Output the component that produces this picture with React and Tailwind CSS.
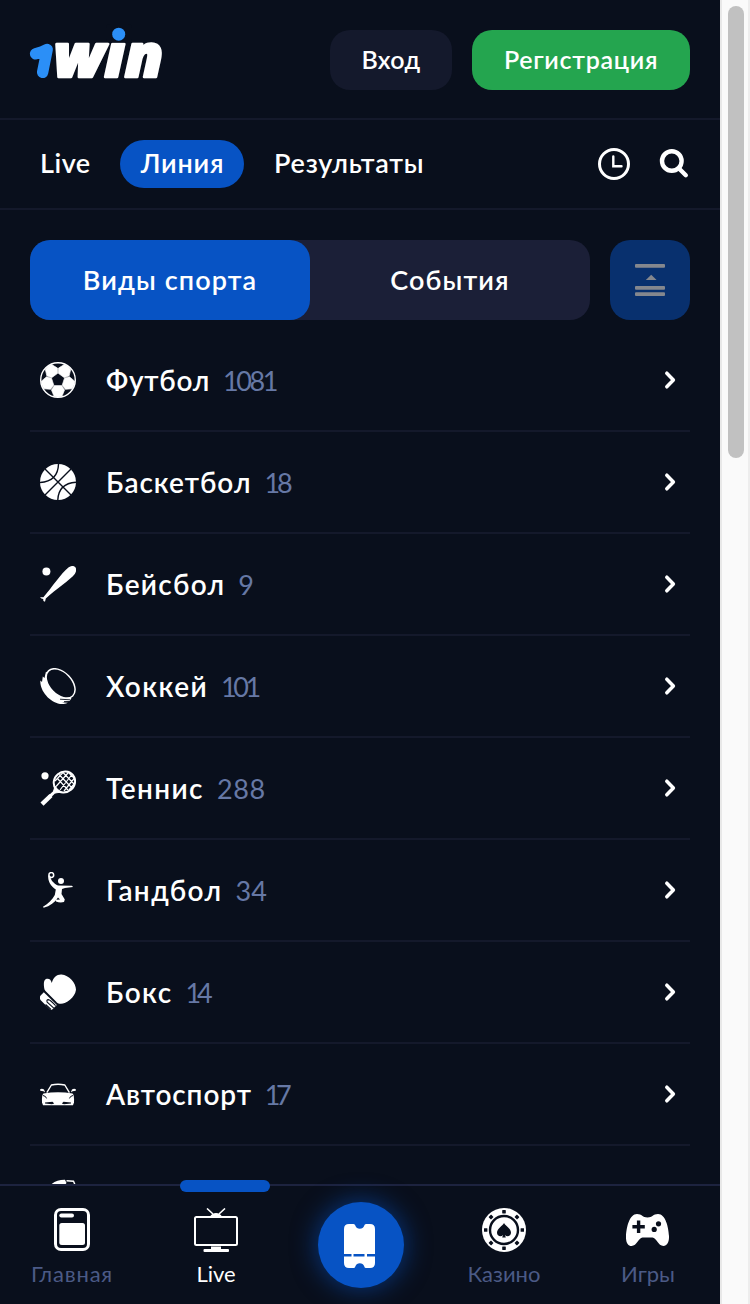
import React from "react";

const BG = "#090f1c";

function Logo() {
  return (
    <svg width="150" height="90" viewBox="0 0 150 90" className="block overflow-visible" role="img">
      <path d="M5.6 33.8Q13 32 17.2 29.5L12.6 52.4" fill="none" stroke="#2b8ff7" strokeWidth="11.4" strokeLinecap="round" strokeLinejoin="round" />
      <text x="23.4" y="56.8" fontSize="60" fontWeight="800" fontStyle="italic" fontFamily="'Open Sans','Noto Sans',sans-serif" fill="#fff" stroke="#fff" strokeWidth="2.6" strokeLinejoin="round" textLength="110" lengthAdjust="spacingAndGlyphs">win</text>
      <rect x="76" y="4" width="26" height="18.6" rx="4" fill={BG} />
      <circle cx="88.7" cy="14.2" r="6.5" fill="#2b8ff7" />
    </svg>
  );
}

function Football() {
  return (
    <svg width="36" height="36" viewBox="0 0 36 36">
      <circle cx="18" cy="18" r="17.3" fill="none" stroke="#fff" strokeWidth="1.4" />
      {[0, 72, 144, 216, 288].map((a) => (
        <path key={a} transform={`rotate(${a} 18 18)`} d="M14.3 23.6H21.7L24.6 27.9L22 34.2Q18 35.6 14 34.2L11.4 27.9Z" fill="#fff" stroke="#fff" strokeWidth=".6" strokeLinejoin="round" />
      ))}
    </svg>
  );
}

function Basketball() {
  return (
    <svg width="36" height="36" viewBox="0 0 36 36">
      <circle cx="18" cy="18" r="18" fill="#fff" />
      <path d="M5 5L31 31M31 5L5 31M18.5 0Q18 17.5 0 18.5M36 18.3Q18.5 19.5 17.8 36" fill="none" stroke={BG} strokeWidth="1.4" />
    </svg>
  );
}

function Baseball() {
  return (
    <svg width="36" height="36" viewBox="0 0 36 36" fill="#fff">
      <circle cx="6.4" cy="5.5" r="4" />
      <path d="M28.4 1.4Q33-1.4 35.4 1.2Q37.2 4 34.8 8C30 14 16 23 5.8 32.6L5 35.8L3.4 35L3.2 33L1.4 32.6L0 31.2L3.4 31.2C12 21 21.4 7 28.4 1.4Z" />
    </svg>
  );
}

function Hockey() {
  return (
    <svg width="36" height="36" viewBox="0 0 36 36">
      <path d="M6 3.5L4.5 10L2.8 8.5L2 14L.4 12.5C-.5 22 9 34 20 36Q25 36.4 28 34.8L22 34.2L29.5 33.2L31.5 30Z" fill="#fff" />
      <ellipse cx="20.6" cy="15.4" rx="17.4" ry="11" transform="rotate(46 20.6 15.4)" fill={BG} stroke="#fff" strokeWidth="1.5" />
      <path d="M20 31.2L30 31.8M24 33.6H30" stroke={BG} strokeWidth=".9" />
    </svg>
  );
}

function Tennis() {
  return (
    <svg width="36" height="36" viewBox="0 0 36 36" fill="none" stroke="#fff">
      <circle cx="5" cy="5.8" r="3.6" fill="#fff" stroke="none" />
      <ellipse cx="24.4" cy="12" rx="11" ry="10.2" transform="rotate(-40 24.4 12)" strokeWidth="2" />
      <path d="M17 8L28 20M19 4.5L32 18M23 2.5L34 14M28 2L35 9M31.5 5L20 20M28 3L16 16.5M23 2.5L15 11M34.5 8L24 21M35 13L29 20" strokeWidth="1.2" />
      <path d="M15 16Q17 20 21.5 22L15 23L13.5 21.5Z" fill="#fff" strokeWidth="1" />
      <path d="M15.5 21L9 27.2" strokeWidth="3" />
      <path d="M11 25.5L2 34.2" strokeWidth="4.4" />
    </svg>
  );
}

function Handball() {
  return (
    <svg width="36" height="36" viewBox="0 0 36 36" fill="#fff">
      <circle cx="11.3" cy="3" r="2.4" fill="none" stroke="#fff" strokeWidth="1.5" />
      <circle cx="21" cy="9" r="3" />
      <path d="M8.3 3.5L10.2 3.8C10.5 8 13.5 11.5 18 13.5L32 13.8L33 15L25 16L22 17L21.5 22L24.8 27.5L24 30Q20 31 16 29.5L16 27.8L20 27.6L18 25.5C15 30.5 10 34 3.6 35.8L3 34.7C8.5 31.5 12 28 14.8 23L15.8 17.5C11 14.5 7.5 9 8.3 3.5Z" />
    </svg>
  );
}

function Boxing() {
  return (
    <svg width="36" height="36" viewBox="0 0 36 36">
      <path d="M4.5 15.5C3.4 10 3.6 5.4 6.6 4.8C9.6 4.4 11 6 11.8 9C13 3.5 17 .2 21.5 .5C29 1 36 9 36 15.8C35 24 26 29.6 21 29.8C18.4 29.8 17 28.6 16 27.4L5.5 17Z" fill="#fff" />
      <path d="M3.8 18.3L16.8 30.9L12.2 35.6Q11 36.2 9.8 35.2L.5 26Q-.4 24 .2 22Z" fill="#fff" />
      <path d="M13.8 34.2L7.2 28.2Q6.2 25.8 8.4 25.6Q10 25.6 15.6 31.6M11 35.5L5.6 30.5" fill="none" stroke={BG} strokeWidth="1.1" />
    </svg>
  );
}

function Car() {
  return (
    <svg width="36" height="36" viewBox="0 0 36 36">
      <path d="M6.8 16.6L11.4 9Q18 7.4 24.8 9L29.4 16.6" fill="none" stroke="#fff" strokeWidth="1.4" />
      <path d="M0 13.4Q2 12 4 13.6L5.2 16.4L3.4 15.2L.3 14.8ZM36 13.4Q34 12 32 13.6L30.8 16.4L32.6 15.2L35.7 14.8Z" fill="#fff" />
      <path d="M3.4 17.4Q18 15 32.6 17.4Q34.4 19 34 26.5L33 29.2H3L2 26.5Q1.6 19 3.4 17.4Z" fill="#fff" />
      <path d="M3 19.5Q6 20 6.5 22.4M33 19.5Q30 20 29.5 22.4" stroke={BG} strokeWidth="1" fill="none" />
      <path d="M5 26.4L12.5 25.8L14.2 27.6L12 28.2L5 27.6ZM31 26.4L23.5 25.8L21.8 27.6L24 28.2L31 27.6Z" fill={BG} />
    </svg>
  );
}

function Cycling() {
  return (
    <svg width="36" height="36" viewBox="0 0 36 36">
      <path d="M10 6.5Q16 .6 25 .8L26.5 4L24 7Z" fill="#fff" />
      <path d="M26.5 1.8L33.5 2.2L35.5 7" fill="none" stroke="#fff" strokeWidth="1.4" />
    </svg>
  );
}

const sports = [
  ["Футбол", "1081", Football, "tracking-[0.7px]", "tracking-[-2.4px]"],
  ["Баскетбол", "18", Basketball, "tracking-[0.95px]", "tracking-[-3px]"],
  ["Бейсбол", "9", Baseball, "tracking-[1.25px]", ""],
  ["Хоккей", "101", Hockey, "tracking-[1.4px]", "tracking-[-3.4px]"],
  ["Теннис", "288", Tennis, "tracking-[1.4px]", "tracking-[0.6px]"],
  ["Гандбол", "34", Handball, "tracking-[1.4px]", ""],
  ["Бокс", "14", Boxing, "tracking-[1.3px]", "tracking-[-4px]"],
  ["Автоспорт", "17", Car, "tracking-[0.9px]", "tracking-[-4.5px]"],
];

function SportRow({ name, count, Icon, nameTracking, countTracking }) {
  return (
    <li className="flex h-[102px] shrink-0 items-center border-b-2 border-[#14192b] pl-2.5 pr-3">
      <Icon />
      <span className={`ml-[30px] text-[28px] font-semibold leading-9 ${nameTracking}`}>{name}</span>
      <span className={`ml-[13px] pt-0.5 text-[27px] leading-9 text-[#6678a5] ${countTracking}`}>{count}</span>
      <svg className="ml-auto" width="16" height="20" viewBox="0 0 16 20">
        <path d="M4.8 3.2L11.4 10L4.8 16.8" fill="none" stroke="#fff" strokeWidth="3.5" strokeLinecap="round" strokeLinejoin="round" />
      </svg>
    </li>
  );
}

function NavItem({ label, active, tracking = "", children }) {
  return (
    <a className={`flex w-36 flex-col items-center pt-[22px] text-[22px] leading-[30px] ${active ? "text-white" : "text-[#4b5a86]"}`}>
      {children}
      <span className={`mt-[7px] ${tracking}`}>{label}</span>
    </a>
  );
}

export default function App() {
  return (
    <div className="flex h-[1304px] w-[750px] overflow-hidden bg-[#090f1c] font-['Lato','Noto_Sans',sans-serif] text-white">
      <div className="flex h-full w-[720px] flex-col">
        <header className="flex h-[120px] shrink-0 items-start border-b-2 border-[#14192b] px-[30px]">
          <div className="mt-5"><Logo /></div>
          <button className="ml-auto mt-[30px] h-[60px] w-[122px] rounded-[20px] bg-[#14192c] text-[25px] font-semibold tracking-[0.4px]">Вход</button>
          <button className="ml-5 mt-[30px] h-[60px] w-[218px] rounded-[20px] bg-[#24a54f] text-[25px] font-semibold tracking-[0.7px]">Регистрация</button>
        </header>

        <nav className="flex h-[90px] shrink-0 items-center border-b-2 border-[#14192b] pl-5 pr-[30px] text-[27px] font-semibold leading-9 tracking-[0.8px]">
          <a className="w-[100px] pb-0.5 pl-5 tracking-[0.5px]">Live</a>
          <a className="flex h-12 w-[124px] items-center justify-center rounded-full bg-[#0753c4] pb-0.5 pl-px">Линия</a>
          <a className="ml-[30px] pb-0.5">Результаты</a>
          <svg className="ml-auto" width="32" height="32" viewBox="0 0 32 32" fill="none" stroke="#fff">
            <circle cx="16" cy="16" r="14.5" strokeWidth="3" />
            <path d="M15.3 8.5V18.2H23.5" strokeWidth="2.4" strokeLinecap="round" />
          </svg>
          <svg className="ml-[28px]" width="32" height="32" viewBox="0 0 32 32" fill="none" stroke="#fff" strokeWidth="4.4">
            <circle cx="13.8" cy="13" r="9.8" />
            <path d="M21 20.5L27.8 27.2" strokeLinecap="round" />
          </svg>
        </nav>

        <main className="flex min-h-0 flex-1 flex-col overflow-hidden px-[30px] pt-[30px]">
          <div className="flex h-20 shrink-0 gap-5">
            <div className="flex w-[560px] rounded-[20px] bg-[#1b1f37] text-[27px] font-semibold tracking-[1.1px]">
              <button className="w-[280px] rounded-[20px] bg-[#0753c4]">Виды спорта</button>
              <button className="w-[280px]">События</button>
            </div>
            <button className="flex w-20 items-center justify-center rounded-[20px] bg-[#08306e]">
              <svg width="30" height="32" viewBox="0 0 30 32" fill="#84878e">
                <rect width="30" height="3.8" rx="1" />
                <path d="M10.8 16L16.2 10.8L21.6 16Z" />
                <rect y="22" width="30" height="3.8" rx="1" />
                <rect y="28.2" width="30" height="3.8" rx="1" />
              </svg>
            </button>
          </div>
          <ul className="mt-2.5 flex flex-col">
            {sports.map(([name, count, Icon, nameTracking, countTracking]) => (
              <SportRow key={name} name={name} count={count} Icon={Icon} nameTracking={nameTracking} countTracking={countTracking} />
            ))}
            <li className="flex h-[102px] shrink-0 items-center pl-2.5"><Cycling /></li>
          </ul>
        </main>

        <footer className="relative flex h-[120px] shrink-0 border-t-2 border-[#1d233f]">
          <span className="absolute -top-1.5 left-[180px] h-3 w-[90px] rounded-full bg-[#0753c4]" />
          <NavItem label="Главная" tracking="tracking-[0.8px]">
            <svg width="44" height="44" viewBox="0 0 44 44" fill="#fff">
              <rect x="5.5" y="1.5" width="33" height="40" rx="5.5" fill="none" stroke="#fff" strokeWidth="3" />
              <rect x="9.3" y="5.5" width="14.7" height="4" rx="2" />
              <rect x="9.3" y="15" width="25.7" height="22" rx="2.5" />
            </svg>
          </NavItem>
          <NavItem label="Live" active>
            <svg width="44" height="44" viewBox="0 0 44 44" fill="#fff">
              <rect x="1" y="9" width="42" height="28" rx="1.5" fill="none" stroke="#fff" strokeWidth="2" />
              <path d="M13 .5L19 6M31 .5L25 6" stroke="#fff" strokeWidth="1.6" />
              <path d="M16 8.5Q18 5 22 5T28 8.5ZM17 38.5H27V41H17Z" />
              <rect x="9.5" y="41" width="25.5" height="3" rx="1" />
            </svg>
          </NavItem>
          <div className="w-36 pl-[30px] pt-4">
            <button className="flex size-[86px] items-center justify-center rounded-full bg-[#0753c4] pt-0.5 shadow-[0_0_24px_2px_#0753c488]">
              <svg className="-ml-0.5" width="32" height="44" viewBox="0 0 32 44" fill="#fff">
                <path d="M5 0H9.5Q11 0 11.3 1.5Q12.5 4.8 15.8 4.8T20.3 1.5Q20.6 0 22 0H26Q31 0 31 5V30H0V5Q0 0 5 0ZM0 32.6H31V39Q31 44 26 44H22Q20.6 44 20.3 42.5Q19 39.3 15.8 39.3T11.3 42.5Q11 44 9.5 44H5Q0 44 0 39Z" />
                <path d="M7.5 29.5H9.5V33H7.5ZM20.5 29.5H23V33H20.5Z" />
              </svg>
            </button>
          </div>
          <NavItem label="Казино">
            <svg width="44" height="44" viewBox="0 0 44 44">
              <circle cx="22" cy="22" r="22" fill="#fff" />
              <circle cx="22" cy="22" r="14" fill="none" stroke={BG} strokeWidth="2.4" />
              {[0, 45, 90, 135, 180, 225, 270, 315].map((a) => (
                <rect key={a} x="20.2" y="2" width="3.6" height="3.4" rx=".4" transform={`rotate(${a} 22 22)`} fill={BG} />
              ))}
              <path d="M22 15C23 17.5 29 20.5 29 24.8C29 28.3 24.8 29.2 23 27L23.8 29.4H20.2L21 27C19.2 29.2 15 28.3 15 24.8C15 20.5 21 17.5 22 15Z" fill={BG} />
            </svg>
          </NavItem>
          <NavItem label="Игры">
            <svg width="44" height="44" viewBox="0 0 44 44">
              <path d="M0 28C.5 19 3.5 6 11 6C16 6 16.5 9.5 21.5 9.5S27 6 32 6C39.5 6 42.5 19 43 28C43.3 34.5 41 38 37.5 38C32 38 30.5 30 26.5 29.6H16.5C12.5 30 11 38 5.5 38C2 38-.3 34.5 0 28Z" fill="#fff" />
              <path d="M12.6 12.5V25M6.4 18.7H18.8" stroke={BG} strokeWidth="3.4" />
              <circle cx="32.5" cy="15.8" r="2.6" fill={BG} /><circle cx="28.2" cy="21.4" r="2.6" fill={BG} />
            </svg>
          </NavItem>
        </footer>
      </div>

      <div className="h-full w-[30px] border-l-2 border-r-2 border-l-[#e8e8e8] border-r-[#ededed] bg-[#fafafa] pl-1.5 pt-1.5">
        <div className="h-[452px] w-4 rounded-full bg-[#c1c1c1]" />
      </div>
    </div>
  );
}
